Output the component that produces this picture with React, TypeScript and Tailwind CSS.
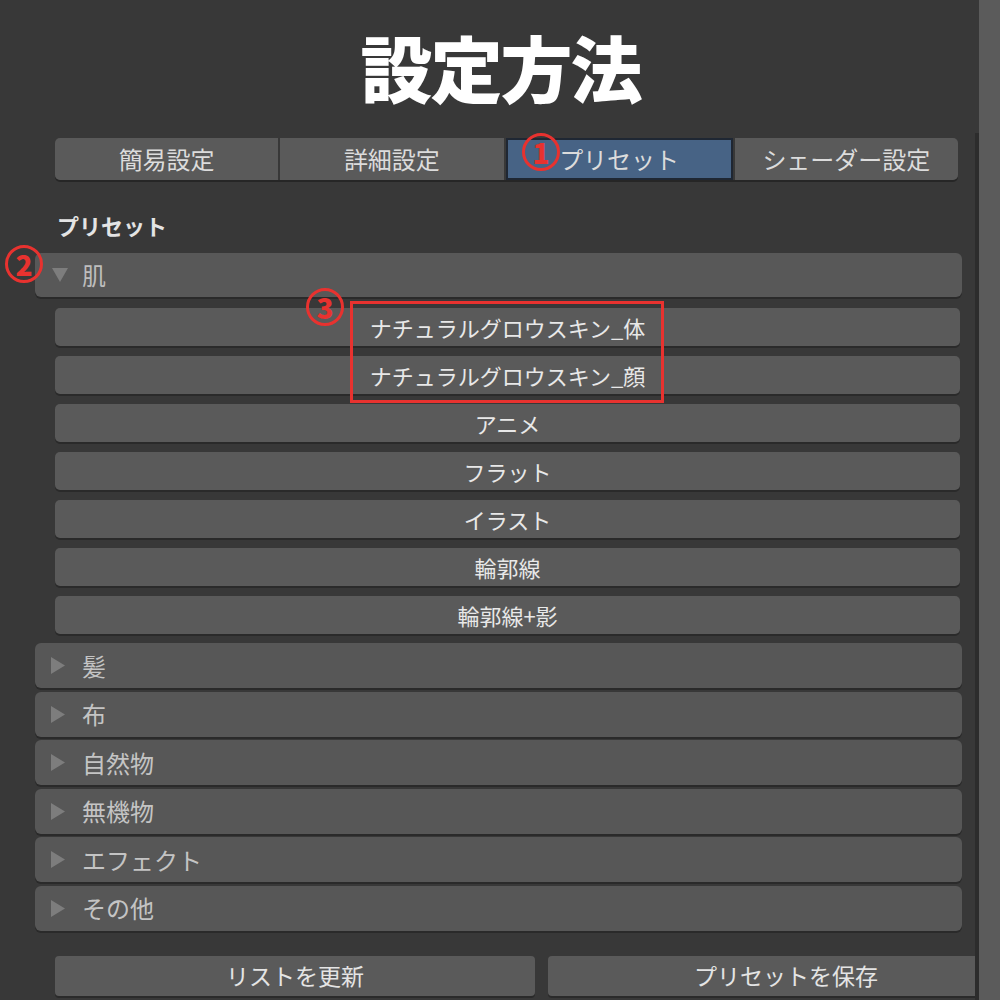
import React from "react";

const font = { fontFamily: '"Noto Sans CJK JP", "Noto Sans", sans-serif' };

const tabs = ["簡易設定", "詳細設定", "プリセット", "シェーダー設定"];
const skinItems = [
  "ナチュラルグロウスキン_体",
  "ナチュラルグロウスキン_顔",
  "アニメ",
  "フラット",
  "イラスト",
  "輪郭線",
  "輪郭線+影",
];
const groups = ["髪", "布", "自然物", "無機物", "エフェクト", "その他"];

function Marker({ n, className }: { n: string; className: string }) {
  return (
    <div
      className={
        "absolute flex items-center justify-center w-[38px] h-[38px] rounded-full border-[3.5px] border-[#e8322f] text-[#e8322f] text-[28px] font-black leading-none " +
        className
      }
    >
      {n}
    </div>
  );
}

function Arrow({ open }: { open?: boolean }) {
  return open ? (
    <svg width="16" height="14" viewBox="0 0 16 14" className="shrink-0">
      <path d="M0 0 H16 L8 14 Z" fill="#7d7d7d" />
    </svg>
  ) : (
    <svg width="14" height="17" viewBox="0 0 14 17" className="shrink-0">
      <path d="M0 0 L14 8.5 L0 17 Z" fill="#7d7d7d" />
    </svg>
  );
}

export default function App() {
  return (
    <div className="relative w-[1000px] h-[1000px] flex bg-[#5b5b5b] overflow-hidden" style={font}>
      <div className="w-[979px] flex flex-col bg-[#383838]">
        {/* title */}
        <div className="h-[133px] flex items-center justify-center pl-[22px] pb-[2px]">
          <h1 className="text-white text-[72px] font-black leading-none tracking-[-2px]">設定方法</h1>
        </div>

        {/* panel */}
        <div className="flex-1 flex flex-col border-r-[4px] border-[#2c2c2c] overflow-hidden">
          <div className="mt-[5px] ml-[55px] w-[903px] h-[42px] flex gap-[2px] rounded-[5px] overflow-hidden shadow-[0_2px_0_#262626]">
            {tabs.map((t, i) => (
              <div
                key={t}
                className={
                  "flex-1 flex items-center justify-center text-[24px] text-[#dcdcdc] " +
                  (i === 2 ? "bg-[#476385] border-2 border-[#1f2733]" : "bg-[#5a5a5a]")
                }
              >
                {t}
              </div>
            ))}
          </div>

          <div className="mt-[30px] ml-[57px] text-[22px] leading-[30px] font-bold text-[#e4e4e4]">プリセット</div>

          <div className="mt-[13px] ml-[35px] w-[927px] h-[44px] flex items-center gap-[14px] pl-[17px] rounded-[6px] bg-[#585858] shadow-[0_2px_0_#2a2a2a]">
            <Arrow open />
            <span className="text-[24px] text-[#bdbdbd]">肌</span>
          </div>

          <div className="mt-[11px] ml-[55px] w-[905px] flex flex-col gap-[10px]">
            {skinItems.map((s) => (
              <div
                key={s}
                className="h-[38px] flex items-center justify-center rounded-[5px] bg-[#5a5a5a] shadow-[0_2px_0_#2a2a2a] text-[22px] text-[#e8e8e8]"
              >
                {s}
              </div>
            ))}
          </div>

          <div className="mt-[9px] ml-[35px] w-[927px] flex flex-col gap-[3.5px]">
            {groups.map((g) => (
              <div
                key={g}
                className="h-[45px] flex items-center gap-[17px] pl-[16px] rounded-[6px] bg-[#575757] shadow-[0_2px_0_#2a2a2a]"
              >
                <Arrow />
                <span className="text-[24px] text-[#c4c4c4]">{g}</span>
              </div>
            ))}
          </div>

          <div className="mt-[25px] ml-[55px] flex gap-[13px] shrink-0">
            <div className="w-[480px] h-[40px] shrink-0 flex items-center justify-center rounded-[4px] bg-[#5a5a5a] shadow-[0_2px_0_#2a2a2a] text-[23px] text-[#e4e4e4]">
              リストを更新
            </div>
            <div className="w-[476px] h-[40px] shrink-0 flex items-center justify-center rounded-[4px] bg-[#5a5a5a] shadow-[0_2px_0_#2a2a2a] text-[23px] text-[#e4e4e4]">
              プリセットを保存
            </div>
          </div>
        </div>
      </div>

      {/* annotations */}
      <Marker n="1" className="left-[522px] top-[133px]" />
      <Marker n="2" className="left-[5px] top-[245px]" />
      <Marker n="3" className="left-[306px] top-[288px]" />
      <div className="absolute left-[350px] top-[301px] w-[314px] h-[102px] border-[3px] border-[#e8322f]" />
    </div>
  );
}
